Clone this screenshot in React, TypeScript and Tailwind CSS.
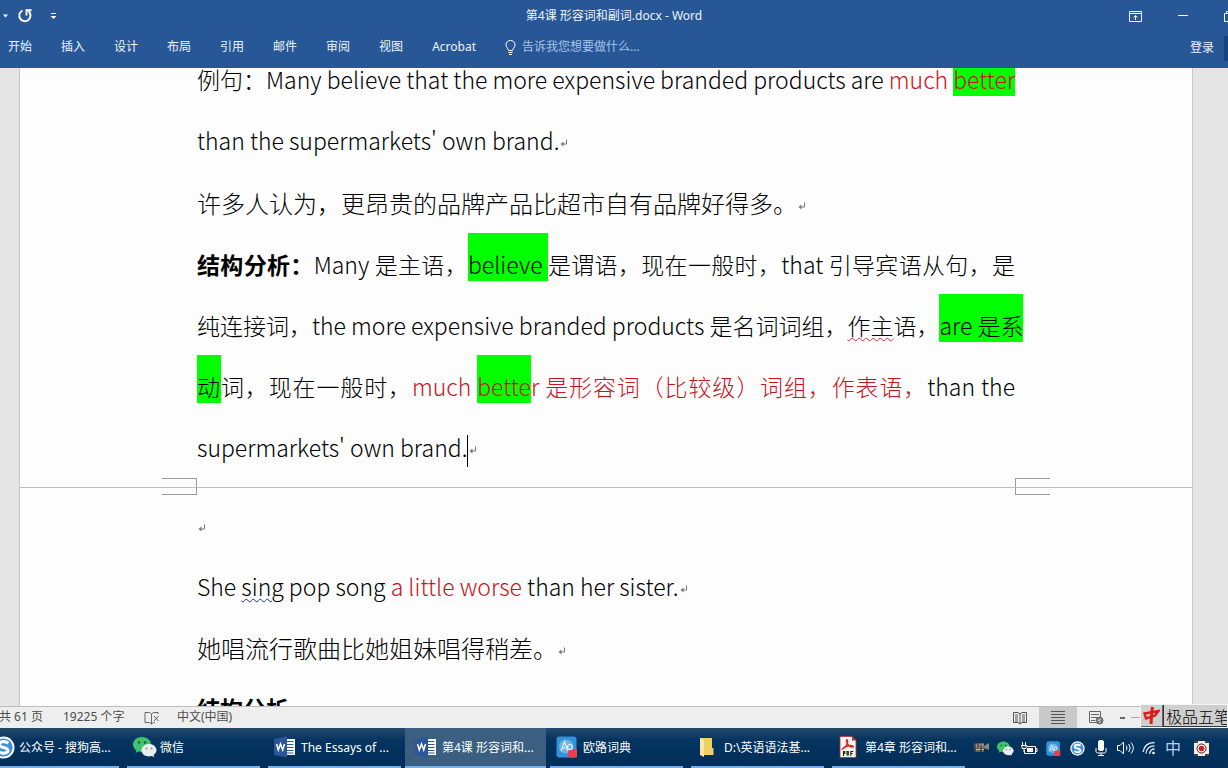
import type { ReactNode } from 'react'

const tabs = ['开始', '插入', '设计', '布局', '引用', '邮件', '审阅', '视图', 'Acrobat']

// --- ICONS ---
const WordIcon = () => (
  <svg width="22" height="22" viewBox="0 0 22 22">
    <path d="M12 3h9v16h-9z" fill="#fff" />
    <path d="M13 5.500h6.500M13 8.500h6.500M13 11.500h6.500M13 14.500h6.500M13 17h6.500" stroke="#2b579a" strokeWidth="1.200" />
    <path d="M0 3l13-2.500v21L0 19z" fill="#2b579a" />
    <path d="M2.500 8l1.800 6L6.500 8l2.200 6 1.800-6" fill="none" stroke="#fff" strokeWidth="1.500" />
  </svg>
)

const WechatIcon = ({ size }: { size: number }) => (
  <svg width={size} height={size} viewBox="0 0 24 24">
    <path d="M9 2C4 2 0 5.300 0 9.500c0 2.400 1.300 4.400 3.300 5.800L2.500 18l3-1.500c1.100.300 2.300.500 3.500.500 5 0 9-3.300 9-7.500S14 2 9 2z" fill="#3fc46b" />
    <path d="M16 9c-4.200 0-7.500 2.700-7.500 6.200s3.300 6.200 7.500 6.200c.900 0 1.800-.100 2.600-.400L21.300 22l-.700-2.200c1.800-1.100 2.900-2.800 2.900-4.600C23.500 11.700 20.200 9 16 9z" fill="#e8ecec" />
    <circle cx="6" cy="7.500" r="1.200" fill="#1c5c36" />
    <circle cx="12" cy="7.500" r="1.200" fill="#1c5c36" />
    <circle cx="13.500" cy="13.500" r="1" fill="#8a9292" />
    <circle cx="18.500" cy="13.500" r="1" fill="#8a9292" />
  </svg>
)

const SogouIcon = ({ size }: { size: number }) => (
  <svg width={size} height={size} viewBox="0 0 24 24">
    <circle cx="12" cy="12" r="11.500" fill="#fff" />
    <circle cx="12" cy="12" r="9.500" fill="#3b8ee0" />
    <path d="M17 7.500C13 4.500 7 6 7.500 9.200c.500 3.300 9 2.300 9.200 5.900.100 3-6 4-10 1" fill="none" stroke="#fff" strokeWidth="3.200" />
  </svg>
)

const EudicIcon = ({ size }: { size: number }) => (
  <svg width={size} height={size} viewBox="0 0 22 22">
    <rect x="0.500" y="0.500" width="20" height="21" rx="3" fill="#3592d8" />
    <circle cx="10" cy="10.500" r="7" fill="#6bb6ea" />
    <path d="M5 15L8.500 6l3.500 9M6.500 12h4" fill="none" stroke="#e2f1fb" strokeWidth="1.200" />
    <circle cx="14" cy="11" r="2.500" fill="none" stroke="#e2f1fb" strokeWidth="1.200" />
    <path d="M12 14.500l9-1.500v8.500h-9z" fill="#ee4048" />
  </svg>
)

const FolderIcon = () => (
  <svg width="22" height="22" viewBox="0 0 22 22">
    <path d="M3 2h12v10h1.500v7H3z" fill="#f3cd67" />
    <path d="M3 2l4 2v17l-4-2z" fill="#fbe7a5" />
  </svg>
)

const PdfIcon = () => (
  <svg width="22" height="22" viewBox="0 0 22 22">
    <path d="M2 0.500h12l4 4v17H2z" fill="#fbf6f5" stroke="#b9302c" strokeWidth="0.800" />
    <path d="M14 0.500v4h4z" fill="#b9302c" />
    <path d="M5 12.500c3-1.500 5.500-6 4.500-8.500-.800-1-1.800.500-.500 3 1.200 2.300 3.500 4.500 6 4 1.300-.800-1-1.800-4-1.300-2.500.400-5 1.300-6 2.800z" fill="none" stroke="#d6302b" strokeWidth="1.400" />
    <path d="M5.500 20v-4.500h1.300v2H5.500M9 15.500h1.300v3.500H9zM12.800 20v-4.500h2.500M12.800 17.500h2" fill="none" stroke="#222" strokeWidth="1.100" />
  </svg>
)

const ReturnMark = () => (
  <svg className="ml-px inline-block" width="8" height="9" viewBox="0 0 8 9">
    <path d="M6.500 0.500v4.500H2" fill="none" stroke="#777" />
    <path d="M3.500 2.500L0.500 5l3 2.500z" fill="#777" />
  </svg>
)

const BookIcon = () => (
  <svg width="14" height="14" viewBox="0 0 14 14" fill="none" stroke="#555">
    <path d="M0.500 1.500H5L7 3l2-1.500h4.500v10H9L7 13l-2-1.500H0.500zM7 3v10M2 4h3M2 6h3M2 8h3M2 10h3M9 4h3M9 6h3M9 8h3M9 10h3" />
  </svg>
)

// --- DOCUMENT ---
const Line = ({ children, fill }: { children: ReactNode; fill?: boolean }) => (
  <span className={fill ? 'block whitespace-nowrap [text-align-last:justify]' : 'block whitespace-nowrap'}>{children}</span>
)

const Mark = ({ children }: { children: ReactNode }) => <mark className="bg-[#00ff00] pt-3.5 text-inherit">{children}</mark>

const Red = ({ children }: { children: ReactNode }) => <span className="text-[#c8141e]">{children}</span>

function PageBreak() {
  return (
    <div className="relative -mx-[177px] flex h-[17px] justify-between px-[142px]">
      <div className="absolute inset-x-0 top-[9px] border-t border-[#bcc0c0]" />
      <div className="w-[35px] border-y border-r border-[#9b9b9b]" />
      <div className="w-[35px] border-y border-l border-[#9b9b9b]" />
    </div>
  )
}

function Document() {
  return (
    <main className="min-h-0 flex-1 overflow-hidden bg-[#e5e5e5]">
      <div className="mr-[35px] ml-[19px] flex h-[720px] flex-col border-x border-[#c6c6c6] bg-[#fdfdfd] px-[177px] font-['Noto_Sans_CJK_SC',sans-serif] text-[23px] leading-[61px] font-light text-black">
        <div className="-mt-[19px] flex flex-col gap-px">
          <p>
            <Line fill>例句：Many believe that the more expensive branded products are <Red>much <Mark>better</Mark></Red></Line>
            <Line>than the supermarkets' own brand.<ReturnMark /></Line>
          </p>
          <p className="text-2xl leading-[61px]">
            <Line>许多人认为，更昂贵的品牌产品比超市自有品牌好得多。<ReturnMark /></Line>
          </p>
          <p>
            <Line fill><b className="font-bold">结构分析：</b>Many 是主语，<Mark>believe </Mark>是谓语，现在一般时，that 引导宾语从句，是</Line>
            <Line fill>纯连接词，the more expensive branded products 是名词词组，<span className="underline decoration-[#d03030] decoration-wavy decoration-1 underline-offset-2">作主</span>语，<Mark>are 是系</Mark></Line>
            <Line fill><Mark>动</Mark>词，现在一般时，<Red>much <Mark>bette</Mark>r 是形容词（比较级）词组，作表语，</Red>than the</Line>
            <Line>supermarkets' own brand.<span className="inline-block h-8 w-px bg-black align-middle" /><ReturnMark /></Line>
          </p>
        </div>
        <PageBreak />
        <div>
          <p><Line><ReturnMark /></Line></p>
          <p>
            <Line>She <span className="underline decoration-[#2030c0] decoration-wavy decoration-1 underline-offset-2">sing</span> pop song <Red>a little worse</Red> than her sister.<ReturnMark /></Line>
          </p>
          <p className="text-2xl leading-[61px]"><Line>她唱流行歌曲比她姐妹唱得稍差。<ReturnMark /></Line></p>
          <p><Line><b className="font-bold">结构分析</b></Line></p>
        </div>
      </div>
    </main>
  )
}

// --- TITLE BAR + RIBBON TABS ---
function Header() {
  return (
    <header className="bg-[#285797] text-xs text-[#eef4fa]">
      <div className="grid h-8 grid-cols-[1fr_auto_1fr] items-center">
        <div className="flex items-center">
          <button aria-label="撤消选项" className="pl-[3px]">
            <svg width="6" height="4" viewBox="0 0 6 4"><path d="M0 0.500h5L2.500 3.500z" fill="#fff" /></svg>
          </button>
          <button aria-label="重复" className="ml-2">
            <svg width="16" height="16" viewBox="0 0 16 16" fill="none" stroke="#fff" strokeWidth="1.900">
              <path d="M5.500 2.500A5.600 5.600 0 1 0 11.500 3.300" />
              <path d="M9.500 7.500V2.300H14.500" />
            </svg>
          </button>
          <button aria-label="自定义快速访问工具栏" className="ml-[17px]">
            <svg width="7" height="7" viewBox="0 0 7 7"><path d="M1 0.500h5" stroke="#fff" /><path d="M0.500 3h6l-3 3z" fill="#fff" /></svg>
          </button>
        </div>
        <h1>第4课 形容词和副词.docx - Word</h1>
        <div className="-mr-2 flex items-center justify-end gap-9">
          <button aria-label="功能区显示选项">
            <svg width="13" height="11" viewBox="0 0 13 11" fill="none" stroke="#fff">
              <path d="M0.500 0.500h12v10H0.500zM0.500 2.500h12M6.500 9V4.500M4.500 6.500l2-2 2 2" />
            </svg>
          </button>
          <button aria-label="最小化">
            <svg width="10" height="10" viewBox="0 0 10 10"><path d="M0 4.500h10" stroke="#fff" /></svg>
          </button>
          <button aria-label="向下还原">
            <svg width="12" height="12" viewBox="0 0 12 12" fill="none" stroke="#fff"><path d="M0.500 3.500h8v8h-8zM2.500 3V1.500h8v8H9" /></svg>
          </button>
        </div>
      </div>
      <div className="flex h-9 items-center justify-between">
        <nav className="flex items-center gap-[29px] pb-1.5 pl-2">
          {tabs.map((tab) => <button key={tab}>{tab}</button>)}
          <button className="flex items-center gap-1.5 text-[#a9c4e8]">
            <svg width="11" height="15" viewBox="0 0 11 15" fill="none" stroke="#fff">
              <path d="M3.500 10.500C3.500 8.500 1 7.500 1 4.900a4.500 4.500 0 0 1 9 0c0 2.600-2.500 3.600-2.500 5.600zM3.500 12.500h4M4 14.500h3" />
            </svg>
            告诉我您想要做什么...
          </button>
        </nav>
        <div className="flex items-center gap-2.5 pb-1">
          <button>登录</button>
          <div className="h-[25px] w-1 bg-[#17427f]" />
        </div>
      </div>
    </header>
  )
}

function StatusBar() {
  return (
    <footer className="relative flex h-[22px] items-center border-t border-[#bdbdbd] bg-[#eeeeee] text-xs text-[#4c4c4c]">
      <span className="-ml-px w-16 pb-0.5">共 61 页</span>
      <span className="w-[81px] pb-0.5">19225 个字</span>
      <button aria-label="校对" className="w-[33px]">
        <svg width="16" height="14" viewBox="0 0 16 14" fill="none" stroke="#666">
          <path d="M7.500 3L5.500 1.500H1v10h4.500l2 1.500zM7.500 3l2-1.500H14V3M7.500 13l2-1.500H11M10 5l4.500 5M14.500 5L10 10" />
        </svg>
      </button>
      <button className="pb-0.5">中文(中国)</button>
      <div className="ml-auto flex h-full items-center">
        <button aria-label="阅读视图" className="flex h-full w-[38px] items-center justify-center"><BookIcon /></button>
        <button aria-label="页面视图" className="flex h-full w-[38px] items-center justify-center bg-[#c9c9c9]">
          <svg width="14" height="13" viewBox="0 0 14 13" fill="none" stroke="#555"><path d="M0 0.500h14M0 3.500h14M0 6.500h14M0 9.500h14M0 12.500h14" /></svg>
        </button>
        <button aria-label="Web 版式视图" className="flex h-full w-[38px] items-center justify-center">
          <svg width="15" height="14" viewBox="0 0 15 14" fill="none" stroke="#666">
            <path d="M7 11.500H0.500V0.500h11V6M2 3.500h8M2 6.500h6M2 9.500h4" />
            <circle cx="10.500" cy="9.500" r="3.500" fill="#777" />
            <path d="M8.500 9l2 .500 1-2M10 12l1.500-1.500" stroke="#eee" />
          </svg>
        </button>
        <span className="ml-[5px] h-0.5 w-[5px] bg-[#666]" />
        <span className="ml-1.5 h-px w-[97px] bg-[#aaa]" />
      </div>
      {/* IME floating bar */}
      <div className="absolute -top-[3px] right-0 flex h-6 w-[88px] items-center overflow-hidden border border-[#f5f5f5] bg-[#cfcfcf] font-['Noto_Sans_CJK_SC',sans-serif] text-base font-light text-black">
        <div className="flex h-full w-[22px] shrink-0 items-center justify-center border-r border-b border-[#666]">
          <svg width="17" height="19" viewBox="0 0 17 19" fill="none" stroke="#dd1c1c">
            <path d="M1.500 7.500L3 12.500l9-3 3.500-4.500z" strokeWidth="2.400" />
            <path d="M9.500 1c-1 5-1 11-1.500 17" strokeWidth="3" />
          </svg>
        </div>
        <span className="flex h-full items-center border-b border-l border-[#333] pl-0.5 whitespace-nowrap">极品五笔</span>
      </div>
    </footer>
  )
}

const tasks = [
  { label: '公众号 - 搜狗高...', icon: <SogouIcon size={23} />, active: false },
  { label: '微信', icon: <WechatIcon size={24} />, active: false },
  { label: 'The Essays of ...', icon: <WordIcon />, active: false },
  { label: '第4课 形容词和...', icon: <WordIcon />, active: true },
  { label: '欧路词典', icon: <EudicIcon size={22} />, active: false },
  { label: 'D:\\英语语法基...', icon: <FolderIcon />, active: false },
  { label: '第4章 形容词和...', icon: <PdfIcon />, active: false },
]

const tray = [
  { name: '录像', icon: (
    <svg width="17" height="12" viewBox="0 0 17 12">
      <path d="M1 1h10v9H1z" fill="#6b625b" /><path d="M11 4l5-3v7l-5-2z" fill="#8b8680" />
      <path d="M1 3h10M2 5h8M3 7.500h8" stroke="#c5b8a8" /><path d="M2 1v9M5 1v5M8 3v7" stroke="#222" />
    </svg>
  ) },
  { name: '微信', icon: <WechatIcon size={17} /> },
  { name: '电池', icon: (
    <svg width="17" height="13" viewBox="0 0 17 13" fill="none" stroke="#fff">
      <path d="M6 4.500h8.500v7h-11V8M15 6.500h1v3h-1M1.500 0v3M4.500 0v3M0 3.500h6M1 4v2.500h4V4M3 7v3" />
      <path d="M6 6h6v4H6z" fill="#fff" stroke="none" />
    </svg>
  ) },
  { name: '欧路词典', icon: <EudicIcon size={15} /> },
  { name: '搜狗', icon: <SogouIcon size={15} /> },
  { name: '麦克风', icon: (
    <svg width="12" height="16" viewBox="0 0 12 16" fill="none" stroke="#fff">
      <rect x="3.500" y="0.500" width="5" height="10" rx="1.500" fill="#fff" />
      <path d="M1 8v3.500c0 1 1 1.500 2 1.500h6c1 0 2-.500 2-1.500V8M6 13v3M3 15.500h6" />
    </svg>
  ) },
  { name: '音量', icon: (
    <svg width="17" height="14" viewBox="0 0 17 14" fill="none" stroke="#fff">
      <path d="M0.500 4.500H3l3.500-3.500v12L3 9.500H0.500zM9 4.500c1.200 1.500 1.200 3.500 0 5M11.500 3c2 2.500 2 5.500 0 8M14 1.500c3 3.500 3 7.500 0 11" />
    </svg>
  ) },
  { name: '网络', icon: (
    <svg width="14" height="14" viewBox="0 0 14 14" fill="none" stroke="#dfe8ef" strokeWidth="1.300">
      <path d="M1 11C2 5 6 1.500 12.500 1.500M4 12.500C4.500 8 7.500 4.800 12.500 4.800M7.500 13c.500-3 2-5 5-5" />
      <circle cx="11.500" cy="12" r="1.300" fill="#fff" stroke="none" />
    </svg>
  ) },
  { name: '输入法', icon: <span className="text-base text-[#b5d0ee]">中</span> },
]

function Taskbar() {
  return (
    <footer className="flex h-10 items-center overflow-hidden bg-linear-to-b from-[#24496c] via-[#043460] via-30% to-[#022e59] text-xs text-white">
      <div className="-ml-[18px] flex h-full">
        {tasks.map((task) => (
          <button key={task.label} className={task.active ? 'flex h-full w-[141px] flex-col bg-[#3a5f80]' : 'flex h-full w-[141px] flex-col px-1'}>
            <span className={task.active ? 'flex flex-1 items-center pl-2.5' : 'flex flex-1 items-center pl-1.5'}>
              <span className="flex w-[27px] shrink-0 justify-start">{task.icon}</span>
              <span className="pt-0.5 whitespace-nowrap">{task.label}</span>
            </span>
            <span className="h-0.5 w-full bg-[#76b0ec]" />
          </button>
        ))}
      </div>
      <div className="ml-auto flex h-full items-center pr-[15px]">
        {tray.map((item) => (
          <button key={item.name} aria-label={item.name} className="flex w-6 items-center justify-center">{item.icon}</button>
        ))}
        <button aria-label="录制" className="ml-1 flex w-6 items-center justify-center">
          <svg width="15" height="15" viewBox="0 0 15 15">
            <path d="M0 0h15v15H0z" fill="#f2ece4" />
            <path d="M0 1h4M11 1h4M0 14h4M11 14h4" stroke="#444" strokeWidth="2" />
            <circle cx="7.500" cy="7.500" r="4.500" fill="#fff" stroke="#4b2020" />
            <circle cx="7.500" cy="7.500" r="2.800" fill="#e01818" />
          </svg>
        </button>
      </div>
    </footer>
  )
}

export default function App() {
  return (
    <div lang="zh-CN" className="flex h-screen flex-col overflow-hidden font-['Noto_Sans','Noto_Sans_CJK_SC',sans-serif]">
      <Header />
      <Document />
      <StatusBar />
      <Taskbar />
    </div>
  )
}
